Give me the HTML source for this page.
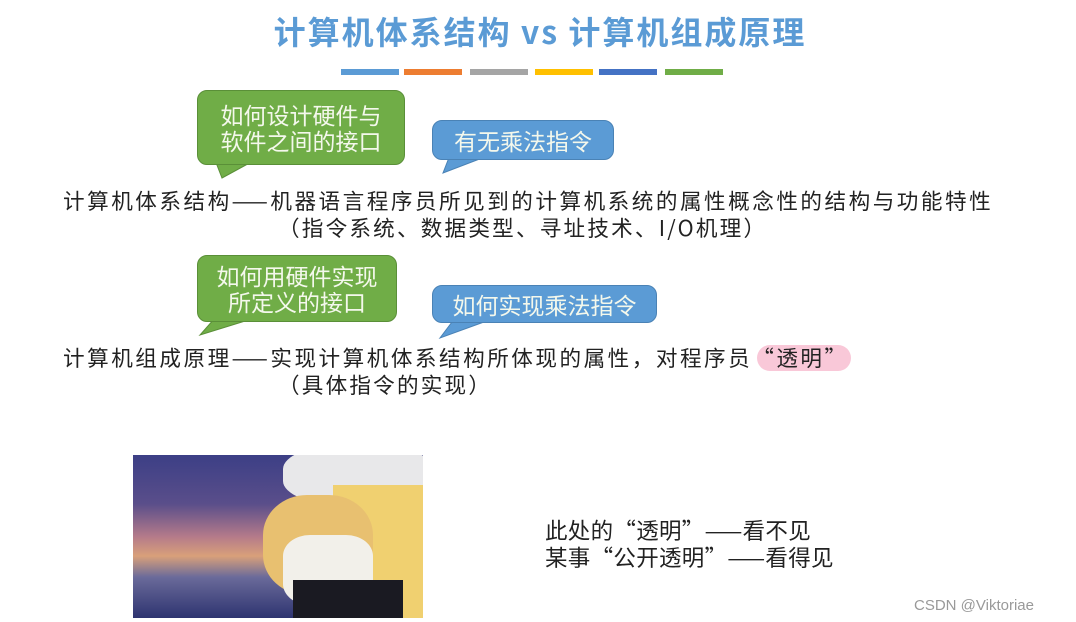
<!DOCTYPE html>
<html><head><meta charset="utf-8"><style>
body{margin:0;width:1076px;height:622px;background:#fff;position:relative;overflow:hidden;font-family:"Noto Sans CJK SC",sans-serif;}
.a{position:absolute;white-space:nowrap}
.t{font-size:21.6px;color:#222;line-height:26px;letter-spacing:2.2px}
.bar{position:absolute;top:69px;height:6px;width:58px}
.bub{position:absolute;border-radius:10px;color:#f4f8ec;font-size:23px;line-height:26px;text-align:center;box-sizing:border-box}
</style></head><body>
<div class="a" style="left:0;width:1080px;top:8px;text-align:center;font-size:32px;font-weight:bold;color:#5b9bd5;line-height:46px;letter-spacing:2px">计算机体系结构 vs 计算机组成原理</div>
<div class="bar" style="left:341px;background:#5b9bd5"></div>
<div class="bar" style="left:404px;background:#ed7d31"></div>
<div class="bar" style="left:470px;background:#a5a5a5"></div>
<div class="bar" style="left:535px;background:#ffc000"></div>
<div class="bar" style="left:599px;background:#4472c4"></div>
<div class="bar" style="left:665px;background:#70ad47"></div>

<svg class="a" style="left:0;top:0" width="1076" height="622">
<path d="M215 160 L222 178 L255 160Z" fill="#70ad47" stroke="#5a8f38"/>
<path d="M450 155 L443 173 L490 155Z" fill="#5b9bd5" stroke="#4a82b5"/>
<path d="M215 318 L200 335 L255 318Z" fill="#70ad47" stroke="#5a8f38"/>
<path d="M455 318 L440 338 L495 318Z" fill="#5b9bd5" stroke="#4a82b5"/>
</svg>
<div class="bub" style="left:197px;top:90px;width:208px;height:75px;background:#70ad47;border:1px solid #5a8f38;padding-top:10px">如何设计硬件与<br>软件之间的接口</div>
<div class="bub" style="left:432px;top:120px;width:182px;height:40px;background:#5b9bd5;border:1px solid #4a82b5;padding-top:6px">有无乘法指令</div>
<div class="bub" style="left:197px;top:255px;width:200px;height:67px;background:#70ad47;border:1px solid #5a8f38;padding-top:6px">如何用硬件实现<br>所定义的接口</div>
<div class="bub" style="left:432px;top:285px;width:225px;height:38px;background:#5b9bd5;border:1px solid #4a82b5;padding-top:5px">如何实现乘法指令</div>

<div class="a t" style="left:63px;top:188px;letter-spacing:2.5px">计算机体系结构——机器语言程序员所见到的计算机系统的属性概念性的结构与功能特性</div>
<div class="a t" style="left:278px;top:215px">（指令系统、数据类型、寻址技术、I/O机理）</div>
<div class="a" style="left:757px;top:345px;width:94px;height:26px;background:#f9c8d8;border-radius:13px"></div>
<div class="a t" style="left:63px;top:345px;letter-spacing:2.5px">计算机组成原理——实现计算机体系结构所体现的属性，对程序员“透明”</div>
<div class="a t" style="left:278px;top:372px">（具体指令的实现）</div>

<div class="a" style="left:133px;top:455px;width:290px;height:163px;background:linear-gradient(180deg,#3c3f86 0%,#5a4e8a 30%,#b47a8a 50%,#d9a07a 62%,#6a6a9a 75%,#2e3470 100%);overflow:hidden">
<div class="a" style="left:150px;top:-10px;width:150px;height:60px;background:#e8e8ea;border-radius:40%"></div>
<div class="a" style="left:200px;top:30px;width:90px;height:133px;background:#f0d070"></div>
<div class="a" style="left:130px;top:40px;width:110px;height:100px;background:#e8c070;border-radius:40%"></div>
<div class="a" style="left:150px;top:80px;width:90px;height:70px;background:#f2f0ea;border-radius:30%"></div>
<div class="a" style="left:160px;top:125px;width:110px;height:38px;background:#1a1a22"></div>
</div>

<div class="a t" style="left:545px;top:517px;font-size:22.5px;letter-spacing:0.3px">此处的“透明”——看不见</div>
<div class="a t" style="left:545px;top:544px;font-size:22.5px;letter-spacing:0.3px">某事“公开透明”——看得见</div>
<div class="a" style="left:914px;top:597px;font-size:15px;color:#999;font-family:'Liberation Sans',sans-serif">CSDN @Viktoriae</div>
</body></html>
